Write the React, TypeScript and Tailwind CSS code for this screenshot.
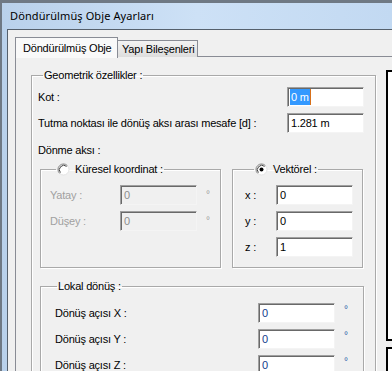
import React from "react";

const ui = "font-['Liberation_Sans',Arial,sans-serif] text-[11px] tracking-[-0.2px] leading-[14px]";

function Field({
  value,
  disabled = false,
  selected = false,
  tone = "text-black",
}: {
  value: string;
  disabled?: boolean;
  selected?: boolean;
  tone?: string;
}) {
  return (
    <div
      className={`w-[77px] h-[20px] shrink-0 flex items-center pl-[2px] border border-t-[#a0a0a0] border-l-[#a0a0a0] border-r-[#f4f4f4] border-b-[#f4f4f4] shadow-[inset_1px_1px_0_#696969] ${
        disabled ? "bg-[#f0f0f0] text-[#8d8d8d]" : `bg-white ${tone}`
      }`}
    >
      {selected ? (
        <span className="flex items-center h-[16px]">
          <span className="bg-[#3399ff] text-white h-[16px] leading-[16px] pr-[1px] pl-[1px]">{value}</span>
          <span className="w-px h-[16px] bg-[#d7701a]" />
        </span>
      ) : (
        <span className="pl-[1px]">{value}</span>
      )}
    </div>
  );
}

function Radio({ checked }: { checked: boolean }) {
  return (
    <svg width="13" height="13" viewBox="0 0 13 13" className="shrink-0">
      <circle cx="6.5" cy="6.5" r="5.5" fill="#fff" stroke="#e3e3e3" />
      <path d="M2.6 10.4 A5.5 5.5 0 0 1 10.4 2.6" fill="none" stroke="#8a8a8a" strokeWidth="1" />
      <path d="M3.4 9.6 A4.4 4.4 0 0 1 9.6 3.4" fill="none" stroke="#404040" strokeWidth="1" />
      {checked && <circle cx="6.5" cy="6.5" r="2" fill="#000" />}
    </svg>
  );
}

const groupBox =
  "border border-[#a9a9a9] shadow-[inset_1px_1px_0_#fff,1px_1px_0_#fff] min-w-0";

export default function App() {
  return (
    <div className={`w-[392px] h-[371px] overflow-hidden flex flex-col bg-[#6f7984] ${ui}`}>
      {/* window frame */}
      <div className="mt-[3px] ml-[2px] flex-1 flex flex-col bg-gradient-to-r from-[#b9d1eb] via-[#cde1f6] to-[#c2d9f2]">
        <div className="h-[26px] flex items-center pl-[8px] pb-[1px] font-['Noto_Sans',sans-serif] text-[11px] tracking-[0.1px] text-black">
          Döndürülmüş Obje Ayarları
        </div>

        <div className="flex-1 flex pl-[5px] min-h-0">
          <div className="flex-1 flex flex-col border-l border-t border-[#55606c] bg-[#f0f0f0] pt-[7px] pl-[7px] min-w-0">
            {/* tabs */}
            <div className="flex items-end h-[20px] -mb-px relative z-10">
              <div className="h-[21px] w-[103px] border border-b-0 border-[#898c95] bg-[#f9f9f9] flex items-center pl-[7px] pb-[1px] mb-[-1px]">
                Döndürülmüş Obje
              </div>
              <div className="h-[17px] w-[80px] border border-l-0 border-b-0 border-[#898c95] bg-gradient-to-b from-[#f3f3f3] to-[#dddddd] flex items-center pl-[4px]">
                Yapı Bileşenleri
              </div>
            </div>

            {/* tab page */}
            <div className="flex-1 border border-[#898c95] border-r-0 bg-[#f0f0f0] pt-[11px] pl-[15px] flex items-start">
              <fieldset className={`${groupBox} w-[345px] shrink-0 pl-[6px] pr-[11px]`}>
                <legend className="ml-[5px] px-[1px]">Geometrik özellikler :</legend>

                <div className="mt-[5px] flex items-center justify-between">
                  <span>Kot :</span>
                  <Field value="0 m" selected />
                </div>
                <div className="mt-[6px] flex items-center justify-between">
                  <span>Tutma noktası ile dönüş aksı arası mesafe [d] :</span>
                  <Field value="1.281 m" />
                </div>
                <div className="mt-[10px]">Dönme aksı :</div>

                <div className="mt-[5px] ml-[2px] flex items-stretch gap-[11px]">
                  <fieldset className={`${groupBox} w-[181px] shrink-0 pl-[9px]`}>
                    <legend className="ml-[6px] px-[1px] flex items-center gap-[5px]">
                      <Radio checked={false} />
                      <span>Küresel koordinat :</span>
                    </legend>
                    <div className="mt-[9px] flex flex-col gap-[6px] text-[#a0a0a0]">
                      <div className="flex items-center">
                        <span className="w-[70px]">Yatay :</span>
                        <Field value="0" disabled />
                        <span className="ml-[9px] self-start mt-[3px] text-[10px]">°</span>
                      </div>
                      <div className="flex items-center">
                        <span className="w-[70px]">Düşey :</span>
                        <Field value="0" disabled />
                        <span className="ml-[9px] self-start mt-[3px] text-[10px]">°</span>
                      </div>
                    </div>
                  </fieldset>

                  <fieldset className={`${groupBox} w-[131px] shrink-0 pl-[12px] pb-[10px]`}>
                    <legend className="ml-[9px] px-[1px] flex items-center gap-[5px]">
                      <Radio checked />
                      <span>Vektörel :</span>
                    </legend>
                    <div className="mt-[9px] flex flex-col gap-[6px]">
                      <div className="flex items-center">
                        <span className="w-[31px]">x :</span>
                        <Field value="0" />
                      </div>
                      <div className="flex items-center">
                        <span className="w-[31px]">y :</span>
                        <Field value="0" />
                      </div>
                      <div className="flex items-center">
                        <span className="w-[31px]">z :</span>
                        <Field value="1" />
                      </div>
                    </div>
                  </fieldset>
                </div>

                <fieldset className={`${groupBox} mt-[11px] ml-[2px] w-[324px] pl-[14px] pb-[10px]`}>
                  <legend className="ml-[2px] px-[1px]">Lokal dönüş :</legend>
                  <div className="mt-[10px] flex flex-col gap-[6px]">
                    <div className="flex items-center">
                      <span className="w-[203px]">Dönüş açısı X :</span>
                      <Field value="0" tone="text-[#123c8c]" />
                      <span className="ml-[9px] self-start mt-[0px] text-[10px] text-[#2d5fa8]">°</span>
                    </div>
                    <div className="flex items-center">
                      <span className="w-[203px]">Dönüş açısı Y :</span>
                      <Field value="0" tone="text-[#123c8c]" />
                      <span className="ml-[9px] self-start mt-[0px] text-[10px] text-[#2d5fa8]">°</span>
                    </div>
                    <div className="flex items-center">
                      <span className="w-[203px]">Dönüş açısı Z :</span>
                      <Field value="0" tone="text-[#123c8c]" />
                      <span className="ml-[9px] self-start mt-[0px] text-[10px] text-[#2d5fa8]">°</span>
                    </div>
                  </div>
                </fieldset>
              </fieldset>

              {/* preview boxes on the right */}
              <div className="ml-[10px] mt-[2px] flex flex-col gap-[6px] w-[40px] shrink-0">
                <div className="h-[271px] border-2 border-black bg-white" />
                <div className="h-[60px] border-2 border-black bg-white" />
              </div>
            </div>
          </div>
        </div>
      </div>
    </div>
  );
}
